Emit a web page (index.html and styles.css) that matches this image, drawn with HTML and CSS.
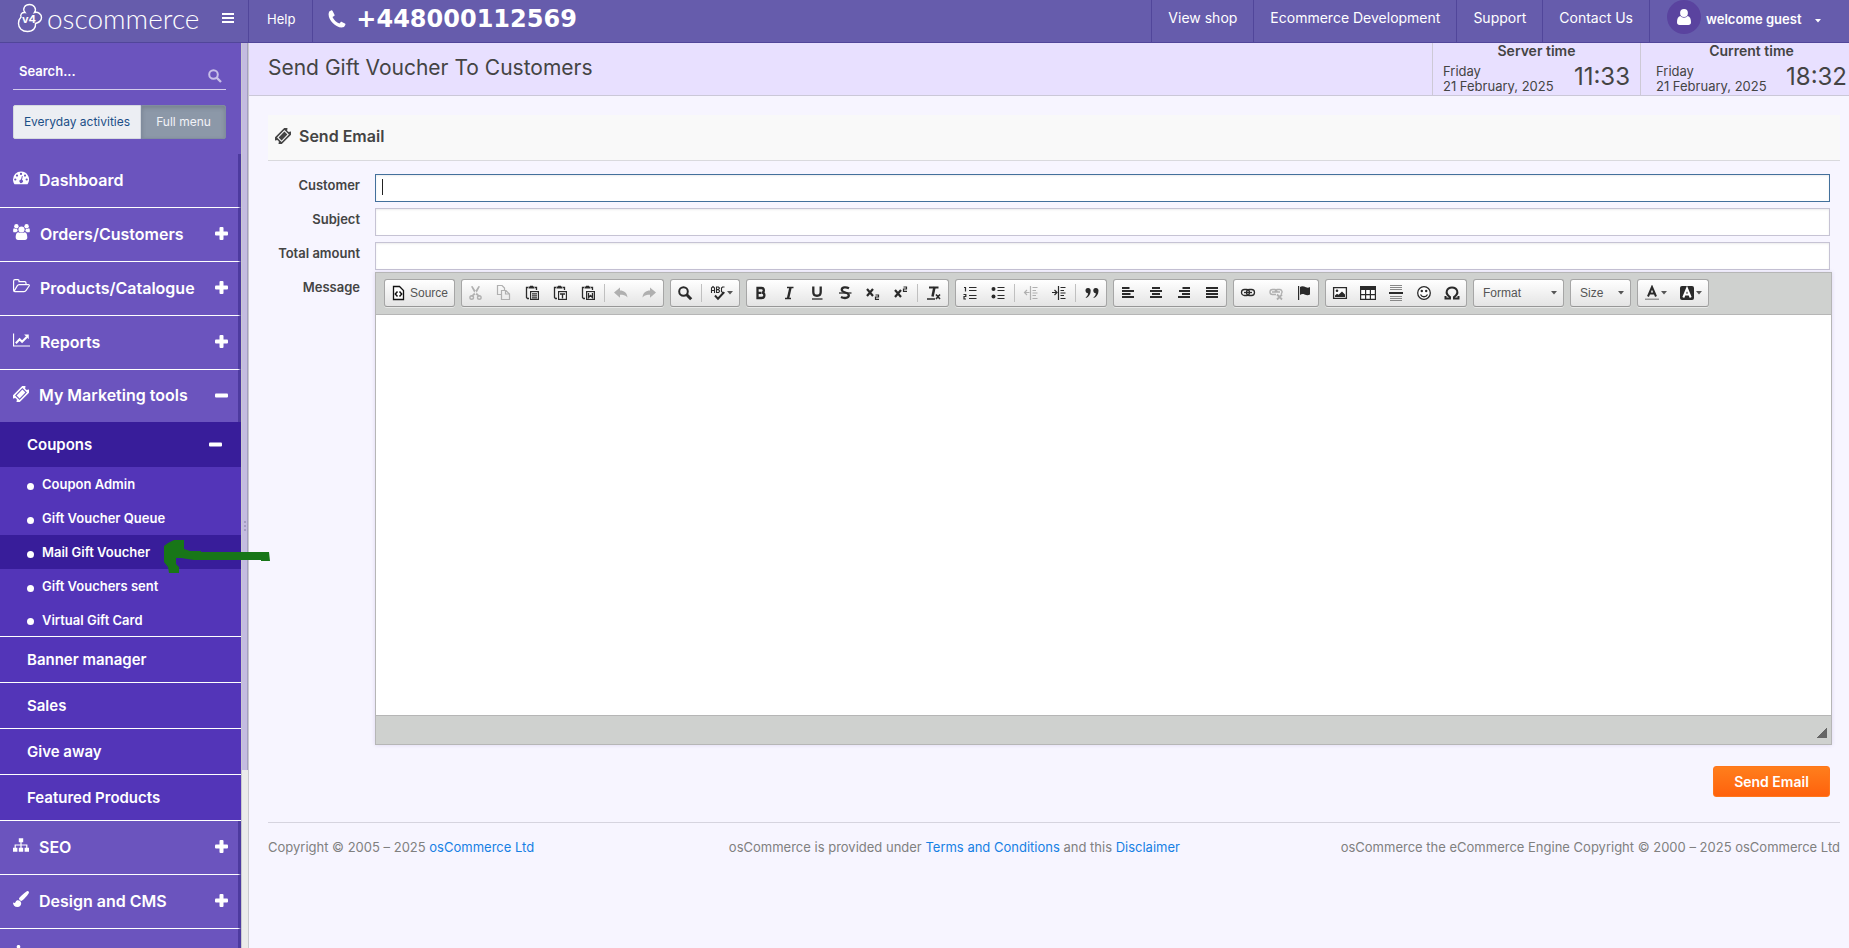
FILE: index.html
```html
<!DOCTYPE html>
<html lang="en">
<head>
<meta charset="utf-8">
<title>Send Gift Voucher To Customers</title>
<link rel="stylesheet" href="styles.css">
</head>
<body>
<svg class="sprite" aria-hidden="true">
  <symbol id="ticket" viewBox="0 0 16 16"><path transform="rotate(-45 8 8)" fill-rule="evenodd" d="M-.5 3.200h17v3a1.800 1.800 0 0 0 0 3.600v3h-17v-3a1.800 1.800 0 0 0 0-3.600zM2.800 4.800v6.400h10.400V4.800zM3.900 5.900h8.200v4.200H3.900z"/></symbol>
  <symbol id="search" viewBox="0 0 14 14"><circle cx="5.500" cy="5.500" r="4.300" fill="none" stroke="currentColor" stroke-width="2"/><path d="M8.600 8.600 13 13" stroke="currentColor" stroke-width="2.300"/></symbol>
  <symbol id="plus" viewBox="0 0 13 13"><rect y="4.500" width="13" height="4" rx="1"/><rect x="4.500" width="4" height="13" rx="1"/></symbol>
  <symbol id="minus" viewBox="0 0 13 13"><rect y="4.500" width="13" height="4" rx="1"/></symbol>
  <symbol id="caret" viewBox="0 0 6 4"><path d="M0 0h6L3 3.500z"/></symbol>
  <symbol id="clip" viewBox="0 0 16 16"><path d="M4 2.500H2.500V12.500l1 1H5M11 2.500h1.500V5" fill="none" stroke="currentColor" stroke-width="1.300"/><path d="M4.500 1.500h6v2h-6zM6 .8h3v1H6z"/><rect x="6.600" y="6.600" width="7.800" height="7.800" fill="#fff" stroke="currentColor" stroke-width="1.200"/></symbol>
</svg>

<header class="topbar">
  <a class="logo" href="#" aria-label="oscommerce">
    <svg class="logo-mark" viewBox="0 0 26 30"><path d="M8 9.500C5 5.500 8 1.500 12.500 1.500S20 6 17.500 9.500c3.500-1 7 1.500 7 5 0 4-3 5-6 6 .5 4-2 8-8 8C5 28.500 1.500 25 1.500 20.500c0-3 1-5 2.500-6.500C3 11.500 5 9 8 9.500z" fill="none" stroke="currentColor" stroke-width="1.400"/><text class="logo-v4" x="5" y="20">v4</text></svg>
    <span class="logo-text">oscommerce</span>
  </a>
  <button class="burger" type="button" aria-label="Toggle menu"><span></span><span></span><span></span></button>
  <a class="top-link help" href="#">Help</a>
  <a class="phone" href="#"><svg viewBox="0 0 18 18"><path d="M3 .6 1.200 1.600C-.5 5.500 1.500 10 5 13.300c3.500 3.400 7.500 5.200 11 3.800l1.300-2.200c.3-.6.100-1-.4-1.300l-3-1.600c-.5-.3-1-.2-1.300.2l-1.200 1.400C8.500 12.800 5.700 9.800 4.500 7l1.600-1c.5-.3.6-.7.4-1.200L4.600 1C4.200.3 3.700.2 3 .6z"/></svg>+448000112569</a>
  <nav class="top-nav">
    <a class="top-link" href="#">View shop</a>
    <a class="top-link" href="#">Ecommerce Development</a>
    <a class="top-link" href="#">Support</a>
    <a class="top-link" href="#">Contact Us</a>
    <a class="user" href="#">
      <span class="avatar"><svg viewBox="0 0 14 16"><circle cx="7" cy="4" r="3.900"/><path d="M3.300 7C1 7.500 0 10 0 13.200 0 15 1 16 2.600 16h8.800c1.600 0 2.600-1 2.600-2.800 0-3.200-1-5.700-3.300-6.200a5 5 0 0 1-7.400 0z"/></svg></span>
      welcome guest
      <svg class="user-caret"><use href="#caret"/></svg>
    </a>
  </nav>
</header>

<div class="layout">
  <aside class="sidebar">
    <div class="tools">
      <label class="search"><input type="text" placeholder="Search..." aria-label="Search"><svg><use href="#search"/></svg></label>
      <div class="switch"><button type="button" class="on">Everyday activities</button><button type="button" class="off">Full menu</button></div>
    </div>
    <nav class="menu">
      <a class="item" href="#"><svg class="ic" viewBox="0 0 16 14"><path fill-rule="evenodd" d="M8 .5a8 8 0 0 0-8 8c0 1.600.5 3.100 1.300 4.400.1.300.4.400.7.400h12c.3 0 .6-.1.700-.4A8 8 0 0 0 8 .5zM2.300 7.400a1.100 1.100 0 1 1 0 2.200 1.100 1.100 0 0 1 0-2.200zM4 3.500a1.100 1.100 0 1 1 0 2.200 1.100 1.100 0 0 1 0-2.200zM8 1.800A1.100 1.100 0 1 1 8 4a1.100 1.100 0 0 1 0-2.200zM12 3.500a1.100 1.100 0 1 1 0 2.200 1.100 1.100 0 0 1 0-2.200zM13.700 7.400a1.100 1.100 0 1 1 0 2.200 1.100 1.100 0 0 1 0-2.200zM8.900 5l.9.200-.8 3.600a1.700 1.700 0 1 1-1-.2z"/></svg>Dashboard</a>
      <a class="item" href="#"><svg class="ic wide" viewBox="0 0 17 16"><circle cx="3.400" cy="2.300" r="2.200"/><circle cx="13.600" cy="2.300" r="2.200"/><path d="M4 4.700C2.500 5.500 1.300 4.300.8 4.300 0 5-.2 8.300.8 8.300h2.400A5 5 0 0 1 4.800 7zM13 4.700c1.500.8 2.700-.4 3.200-.4.800.7 1 4 0 4h-2.400A5 5 0 0 0 12.200 7z"/><circle cx="8.500" cy="5.500" r="3.100"/><path d="M5.300 8.300c1 1 5.400 1 6.400 0 2 0 2.600 3 2.600 5.200 0 1.600-.9 2.400-2.300 2.400H5c-1.400 0-2.300-.8-2.300-2.400 0-2.200.6-5.200 2.600-5.200z"/></svg>Orders/Customers<svg class="sign"><use href="#plus"/></svg></a>
      <a class="item" href="#"><svg class="ic wide" viewBox="0 0 17 14"><path d="M.6 11.500V2C.6 1 1 .6 2 .6h2.800c.8 0 1.200.5 1.200 1.400v.6h5.700c1 0 1.300.4 1.300 1.500v1.200M1 12.400l3.200-5.500c.4-.7 1-1.200 2-1.200h9.100c1 0 1.300.5.800 1.300l-3 4.400c-.5.800-1 1.200-2 1.200H1.800c-.8 0-1.200-.5-1.200-1.300" fill="none" stroke="currentColor" stroke-width="1.200"/></svg>Products/Catalogue<svg class="sign"><use href="#plus"/></svg></a>
      <a class="item" href="#"><svg class="ic wide" viewBox="0 0 18 14"><path d="M.6 0v13.400H18" fill="none" stroke="currentColor" stroke-width="1.200"/><path d="m3 10.500 4-4.200 2.600 2.500 5-5" fill="none" stroke="currentColor" stroke-width="2.200"/><path d="M11.800 1.300h4.900v4.900z"/></svg>Reports<svg class="sign"><use href="#plus"/></svg></a>
      <a class="item open" href="#"><svg class="ic"><use href="#ticket"/></svg>My Marketing tools<svg class="sign"><use href="#minus"/></svg></a>
      <div class="submenu">
        <a class="sub current" href="#">Coupons<svg class="sign"><use href="#minus"/></svg></a>
        <ul class="leafs">
          <li><a href="#">Coupon Admin</a></li>
          <li><a href="#">Gift Voucher Queue</a></li>
          <li class="active"><a href="#">Mail Gift Voucher</a></li>
          <li><a href="#">Gift Vouchers sent</a></li>
          <li><a href="#">Virtual Gift Card</a></li>
        </ul>
        <a class="sub" href="#">Banner manager</a>
        <a class="sub" href="#">Sales</a>
        <a class="sub" href="#">Give away</a>
        <a class="sub" href="#">Featured Products</a>
      </div>
      <a class="item" href="#"><svg class="ic" viewBox="0 0 16 14"><path d="M5.800.3h4.400v3.900H5.800zM0 9.800h4.400v3.900H0zM5.800 9.800h4.400v3.900H5.800zM11.600 9.800H16v3.900h-4.400z"/><path d="M8 4v6M2.200 10V7h11.600v3" fill="none" stroke="currentColor" stroke-width="1.200"/></svg>SEO<svg class="sign"><use href="#plus"/></svg></a>
      <a class="item" href="#"><svg class="ic" viewBox="0 0 16 16"><path d="M14.500 0C13.500 0 6.500 6 6 7.600c-.2.600.6 2.200 2.300 2.400C10 9.500 16 2.800 16 1.500 16 .7 15.300 0 14.500 0zM4.800 9.300C2.500 9.300 3 12 1.500 12 .8 12 .5 11.600 0 11.500 0 14 1.500 16 4.500 16 7 16 8.300 14.200 8.200 12 8 10.500 6.500 9.300 4.800 9.300z"/></svg>Design and CMS<svg class="sign"><use href="#plus"/></svg></a>
      <a class="item" href="#" aria-label="Modules"><svg class="ic" viewBox="0 0 16 16"><path d="M5.500 0C7 0 7.800 1.200 7 3v1.500h5v4c2-1.500 4-.5 4 1.500s-2 3-4 1.500V16H0V4.500h4V3C3.200 1.200 4 0 5.500 0z"/></svg></a>
    </nav>
  </aside>
  <div class="rail"><div class="thumb"><i></i><i></i><i></i></div></div>

  <main class="main">
    <div class="titlebar">
      <h1>Send Gift Voucher To Customers</h1>
      <div class="clock"><strong>Server time</strong><div class="clock-row"><span class="date">Friday<br>21 February, 2025</span><span class="time">11:33</span></div></div>
      <div class="clock"><strong>Current time</strong><div class="clock-row"><span class="date">Friday<br>21 February, 2025</span><span class="time">18:32</span></div></div>
    </div>
    <div class="content">
      <h2 class="panel-title"><svg><use href="#ticket"/></svg>Send Email</h2>
      <form class="form">
        <label for="customer">Customer</label><input class="field focused" id="customer" type="text">
        <label for="subject">Subject</label><input class="field" id="subject" type="text">
        <label for="total">Total amount</label><input class="field" id="total" type="text">
        <label for="message">Message</label>
        <div class="editor">
          <div class="toolbar">
            <div class="group"><button type="button" class="source"><svg viewBox="0 0 16 16"><path d="M3.500 1.500h6l4 4v9h-10z" transform="translate(-1)" fill="#fff" stroke="currentColor" stroke-width="1.300"/><path d="M6.500 6.500 4.300 9l2.200 2.500M8.500 6.500 10.700 9l-2.200 2.500" fill="none" stroke="currentColor" stroke-width="1.500"/></svg>Source</button></div>
            <div class="group">
              <button type="button" aria-label="Cut" class="dim"><svg viewBox="0 0 16 16"><path d="M3 1.500 4.500 1 9 8l3 3-1 1-4-3zM12 1.500 10.500 1 6 8l-3 3 1 1 4-3z"/><circle cx="3.700" cy="12.500" r="1.800" fill="none" stroke="currentColor" stroke-width="1.400"/><circle cx="11.300" cy="12.500" r="1.800" fill="none" stroke="currentColor" stroke-width="1.400"/></svg></button>
              <button type="button" aria-label="Copy" class="dim"><svg viewBox="0 0 16 16"><path d="M5 9.500H1.500v-9H6l2.500 2.500v2M5.500 5.500H10l3.500 3.500v5.500h-8zM9.500 5.500V9h4" fill="none" stroke="currentColor" stroke-width="1.200"/></svg></button>
              <button type="button" aria-label="Paste"><svg viewBox="0 0 16 16"><use href="#clip"/><path d="M8 8.200h5v1.200H8zM8 10.200h5v1.200H8zM8 12.200h5v1.200H8z"/></svg></button>
              <button type="button" aria-label="Paste as text"><svg viewBox="0 0 16 16"><use href="#clip"/><path d="M8 8.200h5v1.500h-1.800v3.800H9.800V9.700H8z"/></svg></button>
              <button type="button" aria-label="Paste from Word"><svg viewBox="0 0 16 16"><use href="#clip"/><path d="M8.500 8v4.500l2-2 2 2V8" fill="none" stroke="currentColor" stroke-width="1.400"/></svg></button>
              <i class="sep"></i>
              <button type="button" aria-label="Undo" class="dim"><svg viewBox="0 0 16 16"><path d="M1 7.500 7 2.500v3c4 0 7 2 7.500 7-2-2.500-4.500-2.800-7.500-2.800v3z"/></svg></button>
              <button type="button" aria-label="Redo" class="dim"><svg viewBox="0 0 16 16"><path d="m15 7.500-6-5v3c-4 0-7 2-7.500 7 2-2.500 4.500-2.800 7.500-2.800v3z"/></svg></button>
            </div>
            <div class="group">
              <button type="button" aria-label="Find"><svg viewBox="0 0 16 16"><circle cx="6.500" cy="6.500" r="4.300" fill="none" stroke="currentColor" stroke-width="2"/><path d="m9.500 9.500 4.700 4.700" stroke="currentColor" stroke-width="3"/></svg></button>
              <i class="sep"></i>
              <button type="button" aria-label="Spell check" class="with-caret"><svg viewBox="0 0 16 16"><path d="M1.500 8V3L3 1.500 4.500 3v5M1.500 5.500h3M6.500 1.500V8M6.500 2h2l1 1-1 1.600h-2M8.500 4.600 9.600 6 8.700 7.500H6.500M14.500 2H12.500L11.500 3v3.500l1 1h2" fill="none" stroke="currentColor" stroke-width="1.100"/><path d="m5 10.500 3 3.300 6-6.500" fill="none" stroke="currentColor" stroke-width="2"/></svg><svg class="drop"><use href="#caret"/></svg></button>
            </div>
            <div class="group">
              <button type="button" aria-label="Bold"><svg viewBox="0 0 16 16"><path d="M4.500 3h4c3 0 3 4.300.6 4.700 3.300.5 2.900 5.300-.6 5.300h-4zM4.500 7.800h4" fill="none" stroke="currentColor" stroke-width="2.300"/></svg></button>
              <button type="button" aria-label="Italic"><svg viewBox="0 0 16 16"><path d="M9.500 2.500 7 13.500" stroke="currentColor" stroke-width="2.400"/><path d="M6 2.500h6.500M4 13.500h6" stroke="currentColor" stroke-width="1.500"/></svg></button>
              <button type="button" aria-label="Underline"><svg viewBox="0 0 16 16"><path d="M4.300 1.500V7c0 5 7.400 5 7.400 0V1.500" fill="none" stroke="currentColor" stroke-width="2.300"/><path d="M3 14h10.500" stroke="currentColor" stroke-width="1.300"/></svg></button>
              <button type="button" aria-label="Strikethrough"><svg viewBox="0 0 16 16"><path d="M12 3.200C9 1.700 4.500 2 4.800 5c.3 3 7 2 7 5.300 0 3.200-4.800 3.200-7.800 1.700" fill="none" stroke="currentColor" stroke-width="2.300"/><path d="M2 8h12.500" stroke="currentColor" stroke-width="1.300"/></svg></button>
              <button type="button" aria-label="Subscript"><svg viewBox="0 0 16 16"><path d="m2 4 6 7M8 4l-6 7" stroke="currentColor" stroke-width="2.200"/><path d="M10.500 10h3v2h-3v2.300H14" fill="none" stroke="currentColor" stroke-width="1.200"/></svg></button>
              <button type="button" aria-label="Superscript"><svg viewBox="0 0 16 16"><path d="m2 5 6 7M8 5l-6 7" stroke="currentColor" stroke-width="2.200"/><path d="M10.500 2h3v2h-3v2.300H14" fill="none" stroke="currentColor" stroke-width="1.200"/></svg></button>
              <i class="sep"></i>
              <button type="button" aria-label="Remove format"><svg viewBox="0 0 16 16"><path d="M3 2.500h9.500" stroke="currentColor" stroke-width="2"/><path d="m8.500 2-2 9.500" stroke="currentColor" stroke-width="2.500"/><path d="M1 14h8M10 9.500l4 4.500M14 9.500 10 14" stroke="currentColor" stroke-width="1.600"/></svg></button>
            </div>
            <div class="group">
              <button type="button" aria-label="Numbered list"><svg viewBox="0 0 16 16"><path d="M2 2.500h1.500v4M1.500 9.500h2.300v2H2v2.500h2M7 2.500h7.500M7 5.500h7.500M7 10.500h7.500M7 13.500h7.500" fill="none" stroke="currentColor" stroke-width="1.200"/></svg></button>
              <button type="button" aria-label="Bulleted list"><svg viewBox="0 0 16 16"><circle cx="3.500" cy="4" r="2"/><circle cx="3.500" cy="11.500" r="2"/><path d="M7.500 2.500H14.500M7.500 5.500H14.500M7.500 10.500H14.500M7.500 13.500H14.500" stroke="currentColor" stroke-width="1.200"/></svg></button>
              <i class="sep"></i>
              <button type="button" aria-label="Outdent" class="dim"><svg viewBox="0 0 16 16"><path d="M7.500 1v14M9.500 2.500h5M9.500 5.500H13M9.500 8h5M9.500 10.500H13M9.500 13.500h5M1.500 7.500h5M4 5 1.500 7.500 4 10" fill="none" stroke="currentColor" stroke-width="1.200"/></svg></button>
              <button type="button" aria-label="Indent"><svg viewBox="0 0 16 16"><path d="M7.500 1v14M9.500 2.500h5M9.500 5.500H13M9.500 8h5M9.500 10.500H13M9.500 13.500h5M1 7.500h5M3.500 5 6 7.500 3.500 10" fill="none" stroke="currentColor" stroke-width="1.200"/></svg></button>
              <i class="sep"></i>
              <button type="button" aria-label="Block quote"><svg viewBox="0 0 16 16"><path d="M4 3a2.500 2.500 0 0 1 2.700 2.800C6.700 9.500 4.800 12 2 13l-.3-.8C3.300 11.300 4 10 4 8.300 1 8.300.3 3 4 3zM11.800 3a2.500 2.500 0 0 1 2.700 2.800c0 3.700-1.900 6.200-4.700 7.200l-.3-.8c1.600-.9 2.300-2.200 2.300-3.900C8.800 8.300 8.100 3 11.800 3z"/></svg></button>
            </div>
            <div class="group">
              <button type="button" aria-label="Align left"><svg viewBox="0 0 16 16"><path d="M2 3h7.500M2 6h12M2 9h8.500M2 12h12" stroke="currentColor" stroke-width="1.800"/></svg></button>
              <button type="button" aria-label="Center"><svg viewBox="0 0 16 16"><path d="M4 3h8M2 6h12M4 9h8M2 12h12" stroke="currentColor" stroke-width="1.800"/></svg></button>
              <button type="button" aria-label="Align right"><svg viewBox="0 0 16 16"><path d="M6.500 3H14M3 6h11M6 9h8M2 12h12" stroke="currentColor" stroke-width="1.800"/></svg></button>
              <button type="button" aria-label="Justify"><svg viewBox="0 0 16 16"><path d="M2 3h12M2 6h12M2 9h12M2 12h12" stroke="currentColor" stroke-width="1.800"/></svg></button>
            </div>
            <div class="group">
              <button type="button" aria-label="Link"><svg viewBox="0 0 16 16"><rect x="1.500" y="4.500" width="8" height="6" rx="3" fill="none" stroke="currentColor" stroke-width="1.300"/><rect x="6.500" y="4.500" width="8" height="6" rx="3" fill="none" stroke="currentColor" stroke-width="1.300"/><path d="M4 7.500h8" stroke="currentColor" stroke-width="1.300"/></svg></button>
              <button type="button" aria-label="Unlink" class="dim"><svg viewBox="0 0 16 16"><path d="M8 9.500H4.500a2.500 2.500 0 0 1 0-5H7a2.500 2.500 0 0 1 2 3M7 7.500a3 3 0 0 1 2-3h3a2.500 2.500 0 0 1 1 4.500M4 7h8" fill="none" stroke="currentColor" stroke-width="1.400"/><path d="m9 9.500 5 5M14 9.500l-5 5" stroke="currentColor" stroke-width="1.800"/></svg></button>
              <button type="button" aria-label="Anchor"><svg viewBox="0 0 16 16"><path d="M2 1h1.200v14H2zM4 2c2-1.500 4-.5 6 .3 1.700.6 3 .3 4-.3v7.500c-2 1.300-3.600.8-5.500 0C6.800 8.800 5.500 9 4 10z"/></svg></button>
            </div>
            <div class="group">
              <button type="button" aria-label="Image"><svg viewBox="0 0 16 16"><path fill="#fff" d="M1.600 2.600h12.800v10.800H1.600z" stroke="currentColor" stroke-width="1.300"/><circle cx="5" cy="5.700" r="1.300"/><path d="M3 12V10.500l2-1.700 1.500 1L10 6.500l3 3V12z"/></svg></button>
              <button type="button" aria-label="Table"><svg viewBox="0 0 16 16"><path fill="#fff" d="M.6 3h14.800v11.400H.6z" stroke="currentColor" stroke-width="1.200"/><path d="M0 1h16v4H0zM5 5h1.200v9H5zM9.800 5H11v9H9.800zM1 9h14v1.200H1z"/></svg></button>
              <button type="button" aria-label="Horizontal line"><svg viewBox="0 0 16 16"><path d="M2 .5h12M2 2.500h12M2 4.500h12M2 11.500h12M2 13.500h12M2 15.500h12" stroke="#888" stroke-width="1"/><path d="M1 7h14v2H1z"/></svg></button>
              <button type="button" aria-label="Smiley"><svg viewBox="0 0 16 16"><circle cx="8" cy="8" r="6.300" fill="#fff" stroke="currentColor" stroke-width="1.300"/><circle cx="5.800" cy="6" r="1.200"/><circle cx="10.200" cy="6" r="1.200"/><path d="M4.500 9.500c1.500 3 5.500 3 7 0" fill="none" stroke="currentColor" stroke-width="1.300"/></svg></button>
              <button type="button" aria-label="Special character"><svg viewBox="0 0 16 16"><path d="M1.500 11v2.500H6V12C0 8 3 2.500 8 2.500S16 8 10 12v1.500h4.500V11" fill="none" stroke="currentColor" stroke-width="2"/></svg></button>
            </div>
            <div class="group"><button type="button" class="combo format">Format<svg class="drop"><use href="#caret"/></svg></button></div>
            <div class="group"><button type="button" class="combo size">Size<svg class="drop"><use href="#caret"/></svg></button></div>
            <div class="group">
              <button type="button" aria-label="Text colour" class="with-caret"><svg viewBox="0 0 16 16"><path d="m4 11.500 4-9.500 4 9.500M5.300 8.500h5.400" fill="none" stroke="currentColor" stroke-width="2"/><path d="M1 13.500h14V15H1z" fill="#999"/></svg><svg class="drop"><use href="#caret"/></svg></button>
              <button type="button" aria-label="Background colour" class="with-caret"><svg viewBox="0 0 16 16"><rect x="1" y="1" width="14" height="14" rx="2"/><path d="m4.300 12.500 3.700-9 3.700 9M5.500 9.500h5" fill="none" stroke="#fff" stroke-width="2"/></svg><svg class="drop"><use href="#caret"/></svg></button>
            </div>
          </div>
          <textarea id="message" class="body"></textarea>
          <div class="status"></div>
        </div>
        <button class="send" type="button">Send Email</button>
      </form>
      <footer class="footer">
        <span>Copyright © 2005 – 2025 <a href="#">osCommerce Ltd</a></span>
        <span class="terms">osCommerce is provided under <a href="#">Terms and Conditions</a> and this <a href="#">Disclaimer</a></span>
        <span>osCommerce the eCommerce Engine Copyright © 2000 – 2025 osCommerce Ltd</span>
      </footer>
    </div>
  </main>
</div>
<svg class="marker" viewBox="0 0 106 34" aria-hidden="true"><path d="M0 6 4 3 10 0H20V9L26 11H37V12H105L106 21H97V20H30L17 18 12 18 12 24 15 27V33H5L4 27 0 22z"/></svg>
</body>
</html>
```
FILE: styles.css
```css
* { box-sizing: border-box; }
body {
  margin: 0;
  height: 100vh;
  display: flex;
  flex-direction: column;
  overflow: hidden;
  background: #f7f5ff;
  color: #444;
  font: 13px/16px Inter, sans-serif;
}
a { color: inherit; text-decoration: none; }
button { font: inherit; cursor: pointer; }
svg { fill: currentColor; flex: none; }
.sprite { position: absolute; width: 0; height: 0; }

/* Top bar */
.topbar {
  display: flex;
  flex: none;
  height: 43px;
  background: #665cac;
  border-bottom: 1px solid #51469a;
  color: #fff;
}
.logo { display: flex; align-items: center; width: 222px; padding: 0 0 7px 17px; gap: 4px; }
.logo-mark { width: 26px; height: 30px; }
.logo-v4 { font: 700 11px Inter, sans-serif; }
.logo-text { font: 300 28px/32px Lato, sans-serif; }
.burger {
  display: flex;
  flex-direction: column;
  gap: 2px;
  width: 26px;
  padding: 13px 14px 0 0;
  border: 0;
  background: none;
}
.burger span { height: 2px; background: #fff; }
.top-link {
  padding: 10px 16px 0;
  border-left: 1px solid #51469a;
  font-size: 14px;
}
.help { padding: 11px 17px 0 18px; font-size: 13px; }
.phone {
  display: flex;
  gap: 10px;
  padding: 5px 0 0 15px;
  border-left: 1px solid #51469a;
  font: 700 24px/28px "DejaVu Sans", sans-serif;
}
.phone svg { width: 18px; height: 18px; margin-top: 5px; }
.top-nav { display: flex; margin-left: auto; }
.user {
  display: flex;
  width: 200px;
  gap: 5px;
  padding-left: 17px;
  border-left: 1px solid #51469a;
  font-weight: 600;
  line-height: 39px;
}
.avatar {
  display: flex;
  align-items: center;
  justify-content: center;
  width: 34px;
  height: 34px;
  border-radius: 50%;
  background: #5a439f;
}
.avatar svg { width: 14px; height: 16px; }
.user-caret { width: 6px; height: 4px; margin: 19px 0 0 9px; }

/* Sidebar */
.layout { display: flex; flex: 1; min-height: 0; }
.sidebar { flex: none; width: 241px; overflow: hidden; background: #6b54be; color: #fff; }
.tools { padding: 16px 15px 15px 13px; }
.search { display: flex; align-items: center; height: 31px; border-bottom: 1px solid #d3cbec; }
.search input {
  flex: 1;
  min-width: 0;
  padding: 0 6px 6px;
  border: 0;
  outline: 0;
  background: none;
  color: #fff;
  font: 600 13px/16px Inter, sans-serif;
}
.search input::placeholder { color: #fff; opacity: 1; }
.search svg { width: 14px; height: 14px; margin: 4px 4px 0 0; color: #c8bfe8; }
.switch { display: flex; margin-top: 15px; }
.switch button { height: 34px; padding: 0; border: 1px solid #d5d9df; font-size: 12px; }
.switch .on { width: 128px; border-radius: 2px 0 0 2px; background: #eceef3; color: #1c4f87; }
.switch .off {
  flex: 1;
  border-color: #808c9e;
  border-radius: 0 2px 2px 0;
  background: #8c98a8;
  box-shadow: inset 0 2px 4px rgba(0, 0, 0, .15);
  color: #f2f3f8;
}
.item {
  display: flex;
  align-items: center;
  height: 54px;
  padding: 0 10px 2px 13px;
  border-right: 3px solid #4d3a9f;
  border-bottom: 1px solid #fff;
  font-weight: 600;
  font-size: 16px;
}
.ic { width: 16px; height: 16px; margin: 0 10px 3px 0; }
.ic.wide { width: 17px; }
.sign { width: 13px; height: 13px; margin-left: auto; }
.item.open { height: 52px; border-bottom: 0; }
.submenu { background: #5335b8; }
.sub {
  display: flex;
  align-items: center;
  height: 46px;
  padding: 0 19px 0 27px;
  border-bottom: 1px solid #fff;
  font-weight: 600;
  font-size: 15px;
}
.sub.current { height: 45px; border-bottom: 0; background: #381d9a; }
.leafs { margin: 0; padding: 0; list-style: none; border-bottom: 1px solid #fff; }
.leafs a { display: flex; align-items: center; height: 34px; padding-left: 27px; font-weight: 600; }
.leafs li:last-child a { height: 33px; }
.leafs a::before { content: ""; width: 7px; height: 7px; margin: 4px 8px 0 0; border-radius: 50%; background: #fff; }
.leafs .active { background: #381d9a; }

.rail { flex: none; width: 8px; border: solid #c9c9ce; border-width: 0 1px; background: #ebebeb; }
.thumb {
  display: flex;
  flex-direction: column;
  align-items: center;
  justify-content: center;
  gap: 2px;
  height: calc(80% + 3px);
  padding-top: 238px;
  border-right: 1px solid #a49fc0;
  background: #c4bce0;
}
.thumb i { width: 2px; height: 2px; background: #a49dc2; }

/* Main column */
.main { flex: 1; min-width: 0; }
.titlebar { display: flex; height: 53px; padding-left: 19px; border-bottom: 1px solid #cbc8d8; background: #e8e0ff; }
h1 { flex: 1; margin: 0; font-weight: 400; font-size: 21px; line-height: 50px; }
.clock { width: 208px; padding-left: 10px; border-left: 1px solid #cdc9d6; }
.clock:last-child { width: 209px; padding-left: 15px; }
.clock strong { display: block; padding-right: 10px; text-align: center; font-weight: 600; font-size: 14px; }
.clock-row { display: flex; align-items: center; justify-content: space-between; padding-right: 10px; }
.clock:last-child .clock-row, .clock:last-child strong { padding-right: 2px; }
.date { padding-top: 4px; line-height: 15px; }
.time { font-size: 24px; line-height: 36px; }

.content { padding: 19px 9px 0 19px; }
.panel-title {
  display: flex;
  align-items: center;
  gap: 8px;
  height: 46px;
  margin: 0;
  padding: 0 7px 3px;
  border-bottom: 1px solid #d9d9dd;
  background: #f9f9f9;
  font-weight: 600;
  font-size: 16px;
}
.panel-title svg { width: 16px; height: 16px; }
.form { display: grid; grid-template-columns: 92px 1fr; gap: 6px 15px; padding: 13px 10px 25px 0; }
.form label { padding-top: 3px; text-align: right; font-weight: 600; }
.field {
  width: 100%;
  height: 28px;
  border: 1px solid #c6c3d4;
  outline: 0;
  background: #fff;
  box-shadow: inset 0 1px 2px rgba(0, 0, 0, .08);
}
.focused { border-color: #43709c; background: linear-gradient(#222, #222) 6px 4px / 1px 16px no-repeat #fff; }

/* Rich text editor */
.editor { margin: -4px -2px 0 0; border: 1px solid #b6b6b6; box-shadow: 0 0 4px rgba(70, 50, 150, .15); }
.toolbar { display: flex; flex-wrap: wrap; gap: 6px; padding: 6px 8px 7px; border-bottom: 1px solid #b6b6b6; background: #cfd1cf; }
.group {
  display: flex;
  align-items: center;
  height: 28px;
  border: 1px solid #a6a6a6;
  border-bottom-color: #979797;
  border-radius: 3px;
  background: linear-gradient(#fff, #e4e4e4);
  box-shadow: 0 1px 0 rgba(255, 255, 255, .5);
}
.group button {
  display: flex;
  align-items: center;
  height: 26px;
  padding: 0 6px;
  border: 0;
  background: none;
  color: #2a2a2a;
  font: 12px/14px "Liberation Sans", Arial, sans-serif;
}
.group button svg { width: 16px; height: 16px; }
.group .source, .group .combo { color: #555; }
.group .source svg { margin-right: 3px; color: #111; }
.group .dim { color: #b0b0b0; }
.group .with-caret { width: 35px; }
.group button .drop { width: 6px; height: 4px; margin-left: 1px; color: #555; }
.group .combo { justify-content: space-between; padding: 0 6px 0 9px; }
.group .format { width: 89px; }
.group .size { width: 59px; }
.sep { width: 1px; height: 18px; margin: 0 2px; background: #c0c0c0; }
.body { display: block; width: 100%; height: 400px; border: 0; outline: 0; resize: none; background: #fff; }
.status {
  display: flex;
  align-items: end;
  justify-content: end;
  height: 29px;
  padding: 0 4px 6px;
  border-top: 1px solid #b6b6b6;
  background: #cfd1cf;
}
.status::after { content: ""; width: 10px; height: 10px; background: linear-gradient(135deg, transparent 50%, #666 50%); }
.send {
  grid-column: 2;
  justify-self: end;
  width: 117px;
  height: 31px;
  margin-top: 15px;
  border: 1px solid #ff761b;
  border-radius: 3px;
  background: linear-gradient(#ff7e1c, #ff620d);
  color: #fff;
  font-weight: 600;
  font-size: 14px;
}
.footer { display: flex; justify-content: space-between; padding-top: 16px; border-top: 1px solid #d6d4df; color: #808080; }
.footer a { color: #1680e4; }
.terms { padding-left: 34px; }

/* Hand-drawn pointer over the active menu entry */
.marker { position: absolute; left: 164px; top: 540px; width: 106px; height: 34px; color: #187618; }
```
